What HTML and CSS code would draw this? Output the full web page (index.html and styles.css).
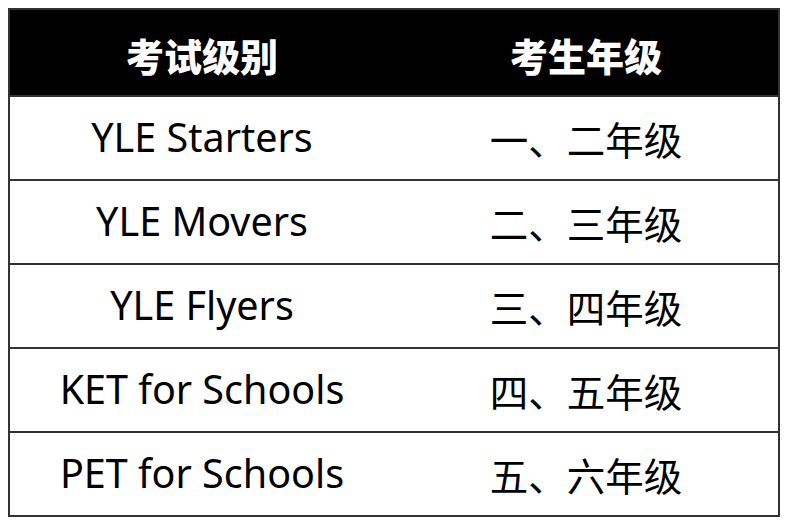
FILE: index.html
```html
<!DOCTYPE html>
<html lang="zh-CN">
<head>
<meta charset="utf-8">
<link rel="stylesheet" href="styles.css">
</head>
<body>
<table class="grade-table">
  <thead>
    <tr><th>考试级别</th><th>考生年级</th></tr>
  </thead>
  <tbody>
    <tr><td>YLE Starters</td><td>一、二年级</td></tr>
    <tr><td>YLE Movers</td><td>二、三年级</td></tr>
    <tr><td>YLE Flyers</td><td>三、四年级</td></tr>
    <tr><td>KET for Schools</td><td>四、五年级</td></tr>
    <tr><td>PET for Schools</td><td>五、六年级</td></tr>
  </tbody>
</table>
</body>
</html>
```
FILE: styles.css
```css
html, body {
  margin: 0;
  padding: 0;
  background: #ffffff;
}
body {
  padding: 8px 0 0 8px;
  font-family: "Noto Sans", "Noto Sans CJK SC", sans-serif;
}
.grade-table {
  border-collapse: collapse;
  width: 772px;
  table-layout: fixed;
  border: 2px solid #333333;
}
.grade-table th {
  background: #000000;
  color: #ffffff;
  font-family: "Noto Sans CJK SC", sans-serif;
  font-weight: 900;
  font-size: 38px;
  height: 87px;
  padding: 4px 0 0 0;
  box-sizing: border-box;
  text-align: center;
  border: none;
}
.grade-table td {
  height: 84px;
  padding: 0;
  box-sizing: border-box;
  font-size: 39.5px;
  color: #000000;
  text-align: center;
  border-top: 2px solid #333333;
  line-height: 1;
}
.grade-table td:last-child {
  font-family: "Noto Sans CJK SC", sans-serif;
  font-size: 38.5px;
}
```
